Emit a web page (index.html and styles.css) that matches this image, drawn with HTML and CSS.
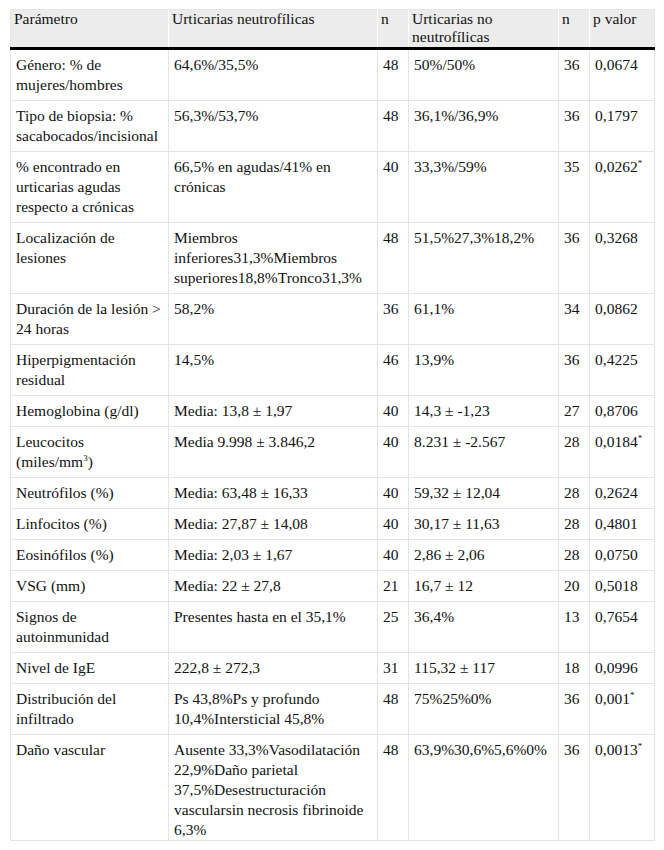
FILE: index.html
```html
<!DOCTYPE html>
<html lang="es">
<head>
<meta charset="utf-8">
<link rel="stylesheet" href="styles.css">
</head>
<body>
<div class="wrap">
<table class="tbl">
<colgroup>
<col class="c1"><col class="c2"><col class="c3"><col class="c4"><col class="c5"><col class="c6">
</colgroup>
<thead>
<tr><th>Parámetro</th><th>Urticarias neutrofílicas</th><th>n</th><th>Urticarias no neutrofílicas</th><th>n</th><th>p valor</th></tr>
</thead>
<tbody>
<tr><td>Género: % de mujeres/hombres</td><td>64,6%/35,5%</td><td class="r">48</td><td>50%/50%</td><td class="r">36</td><td>0,0674</td></tr>
<tr><td>Tipo de biopsia: % sacabocados/incisional</td><td>56,3%/53,7%</td><td class="r">48</td><td>36,1%/36,9%</td><td class="r">36</td><td>0,1797</td></tr>
<tr><td>% encontrado en urticarias agudas respecto a crónicas</td><td>66,5% en agudas/41% en crónicas</td><td class="r">40</td><td>33,3%/59%</td><td class="r">35</td><td>0,0262<sup>*</sup></td></tr>
<tr><td>Localización de lesiones</td><td>Miembros inferiores31,3%Miembros superiores18,8%Tronco31,3%</td><td class="r">48</td><td>51,5%27,3%18,2%</td><td class="r">36</td><td>0,3268</td></tr>
<tr><td>Duración de la lesión &gt; 24 horas</td><td>58,2%</td><td class="r">36</td><td>61,1%</td><td class="r">34</td><td>0,0862</td></tr>
<tr><td>Hiperpigmentación residual</td><td>14,5%</td><td class="r">46</td><td>13,9%</td><td class="r">36</td><td>0,4225</td></tr>
<tr><td>Hemoglobina (g/dl)</td><td>Media: 13,8 ± 1,97</td><td class="r">40</td><td>14,3 ± -1,23</td><td class="r">27</td><td>0,8706</td></tr>
<tr><td>Leucocitos (miles/mm<sup>3</sup>)</td><td>Media 9.998 ± 3.846,2</td><td class="r">40</td><td>8.231 ± -2.567</td><td class="r">28</td><td>0,0184<sup>*</sup></td></tr>
<tr><td>Neutrófilos (%)</td><td>Media: 63,48 ± 16,33</td><td class="r">40</td><td>59,32 ± 12,04</td><td class="r">28</td><td>0,2624</td></tr>
<tr><td>Linfocitos (%)</td><td>Media: 27,87 ± 14,08</td><td class="r">40</td><td>30,17 ± 11,63</td><td class="r">28</td><td>0,4801</td></tr>
<tr><td>Eosinófilos (%)</td><td>Media: 2,03 ± 1,67</td><td class="r">40</td><td>2,86 ± 2,06</td><td class="r">28</td><td>0,0750</td></tr>
<tr><td>VSG (mm)</td><td>Media: 22 ± 27,8</td><td class="r">21</td><td>16,7 ± 12</td><td class="r">20</td><td>0,5018</td></tr>
<tr><td>Signos de autoinmunidad</td><td>Presentes hasta en el 35,1%</td><td class="r">25</td><td>36,4%</td><td class="r">13</td><td>0,7654</td></tr>
<tr><td>Nivel de IgE</td><td>222,8 ± 272,3</td><td class="r">31</td><td>115,32 ± 117</td><td class="r">18</td><td>0,0996</td></tr>
<tr><td>Distribución del infiltrado</td><td>Ps 43,8%Ps y profundo 10,4%Intersticial 45,8%</td><td class="r">48</td><td>75%25%0%</td><td class="r">36</td><td>0,001<sup>*</sup></td></tr>
<tr class="last"><td>Daño vascular</td><td>Ausente 33,3%Vasodilatación 22,9%Daño parietal 37,5%Desestructuración vascularsin necrosis fibrinoide 6,3%</td><td class="r">48</td><td>63,9%30,6%5,6%0%</td><td class="r">36</td><td>0,0013<sup>*</sup></td></tr>
</tbody>
</table>
</div>
</body>
</html>
```
FILE: styles.css
```css
html, body {
  margin: 0;
  padding: 0;
  background: #ffffff;
}
.wrap {
  padding: 9px 0 0 10px;
}
.tbl {
  width: 644px;
  table-layout: fixed;
  border-collapse: collapse;
  font-family: "Liberation Serif", "Times New Roman", serif;
  font-size: 15.5px;
  color: #111;
  border: 1px solid #e4e4e4;
}
.c1 { width: 158px; }
.c2 { width: 209px; }
.c3 { width: 31px; }
.c4 { width: 150px; }
.c5 { width: 31px; }
.c6 { width: 65px; }
.tbl th {
  background: #ececec;
  font-weight: normal;
  text-align: left;
  vertical-align: top;
  line-height: 18px;
  padding: 0 3px 1px 3px;
  border-left: 1px solid #ffffff;
  border-bottom: 3px solid #000;
}
.tbl th:first-child { border-left: none; }
.tbl td {
  vertical-align: top;
  line-height: 20px;
  padding: 5px 4px 5px 5px;
  border: 1px solid #e4e4e4;
}
.tbl td.r { text-align: left; }
.tbl .last td { padding-bottom: 0; }
.tbl sup {
  font-size: 9px;
  line-height: 0;
  vertical-align: 6px;
}
```
